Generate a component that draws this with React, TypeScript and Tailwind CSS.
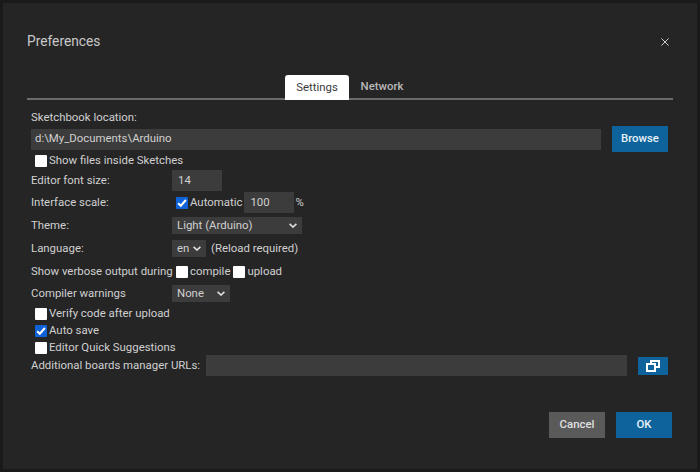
function Box({ checked = false, className = "" }: { checked?: boolean; className?: string }) {
  return checked ? (
    <span className={`flex h-[12px] w-[12px] shrink-0 items-center justify-center rounded-[1px] bg-[#0f62d8] ${className}`}>
      <svg width="10" height="10" viewBox="0 0 9 9" fill="none" stroke="white" strokeWidth="1.8"><path d="M1 4.8 3.4 7 8 1.8" /></svg>
    </span>
  ) : (
    <span className={`block h-[12px] w-[12px] shrink-0 rounded-[1px] bg-white ${className}`} />
  );
}
function Chevron() {
  return (
    <svg width="8" height="5" viewBox="0 0 8 5" fill="none" stroke="#e0e0e0" strokeWidth="1.6"><path d="M.6.8 4 4 7.4.8" /></svg>
  );
}
function Sel({ text, w }: { text: string; w: string }) {
  return (
    <div className={`flex h-[17px] items-center justify-between bg-[#3c3c3c] pl-[5px] pr-[5px] ${w}`}>
      <span>{text}</span>
      <Chevron />
    </div>
  );
}
function Row({ label, h, children }: { label: string; h: string; children?: React.ReactNode }) {
  return (
    <div className={`flex items-center ${h}`}>
      <span className="w-[141px] shrink-0 whitespace-nowrap">{label}</span>
      {children}
    </div>
  );
}
function Check({ label, checked, h }: { label: string; checked?: boolean; h: string }) {
  return (
    <div className={`flex items-center pl-[4px] ${h}`}>
      <Box checked={checked} />
      <span className="ml-[2px]">{label}</span>
    </div>
  );
}
export default function App() {
  return (
    <div className="h-[472px] w-[700px] overflow-hidden bg-[#1a1a1b] p-[3px] text-[11.4px] leading-none text-[#d0d0d0] [font-family:Roboto,sans-serif]">
      <div className="flex h-[466px] flex-col bg-[#252526] px-[24px]">
        <div className="flex h-[71px] shrink-0 items-center justify-between pt-[7px]">
          <h1 className="text-[13.75px] font-normal text-[#c8c8c8]">Preferences</h1>
          <svg className="mr-[4px]" width="8" height="8" viewBox="0 0 8 8" stroke="#cccccc" strokeWidth="1"><path d="M.4.4l7.2 7.2M7.6.4.4 7.6" /></svg>
        </div>
        <div className="flex h-[26px] shrink-0 items-stretch justify-center border-b-2 border-[#6b6b6b]">
          <div className="-mb-[2px] mt-[1px] flex w-[64px] items-center justify-center rounded-t-[3px] bg-white text-[#3a3a3a]">Settings</div>
          <div className="mt-[1px] flex w-[66px] items-center justify-center font-medium text-[#b8b8b8]">Network</div>
        </div>
        <div className="flex flex-col pl-[4px] pr-[5px] pt-[11px]">
          <div className="flex h-[14px] items-center">Sketchbook location:</div>
          <div className="mt-[1px] flex items-center">
            <div className="flex h-[21px] w-[570px] items-center bg-[#3c3c3c] pl-[4px]">d:\My_Documents\Arduino</div>
            <button className="ml-[11px] flex h-[26px] w-[56px] items-center justify-center bg-[#0e639c] font-medium text-[#e8f1f8]">Browse</button>
          </div>
          <Check label="Show files inside Sketches" h="h-[16px] pt-[1px]" />
          <Row label="Editor font size:" h="h-[21px] mt-[2px]">
            <div className="flex h-[21px] w-[50px] items-center bg-[#3c3c3c] pl-[6px]">14</div>
          </Row>
          <Row label="Interface scale:" h="h-[21px] mt-[1px]">
            <Box checked className="ml-[4px]" />
            <span className="ml-[2px]">Automatic</span>
            <div className="ml-[2px] flex h-[21px] w-[50px] items-center bg-[#3c3c3c] pl-[6px]">100</div>
            <span className="ml-[1px]">%</span>
          </Row>
          <Row label="Theme:" h="h-[17px] mt-[4px]"><Sel text="Light (Arduino)" w="w-[130px]" /></Row>
          <Row label="Language:" h="h-[17px] mt-[6px]">
            <Sel text="en" w="w-[34px]" />
            <span className="ml-[5px]">(Reload required)</span>
          </Row>
          <Row label="Show verbose output during" h="h-[17px] mt-[6px]">
            <Box className="ml-[4px]" />
            <span className="ml-[2px]">compile</span>
            <Box className="ml-[3px]" />
            <span className="ml-[2px]">upload</span>
          </Row>
          <Row label="Compiler warnings" h="h-[17px] mt-[5px]"><Sel text="None" w="w-[58px]" /></Row>
          <Check label="Verify code after upload" h="h-[17px] mt-[3px]" />
          <Check label="Auto save" checked h="h-[17px]" />
          <Check label="Editor Quick Suggestions" h="h-[17px]" />
          <div className="-mt-[1px] flex h-[21px] items-center">
            <span className="w-[175px] shrink-0 whitespace-nowrap">Additional boards manager URLs:</span>
            <div className="h-[21px] w-[421px] bg-[#3c3c3c]" />
            <button className="ml-[11px] flex h-[18px] w-[30px] items-center justify-center bg-[#0e639c]">
              <svg width="14" height="12" viewBox="0 0 14 12" fill="none" stroke="white" strokeWidth="2"><path d="M5 3.5V1h8v6h-3" /><rect x="1" y="4" width="8" height="7" /></svg>
            </button>
          </div>
        </div>
        <div className="mt-[36px] flex justify-end gap-[11px] pr-[1px]">
          <button className="flex h-[26px] w-[56px] items-center justify-center bg-[#5a5a5a] font-medium text-[#e0e0e0]">Cancel</button>
          <button className="flex h-[26px] w-[56px] items-center justify-center bg-[#0e639c] font-medium text-[#e8f1f8]">OK</button>
        </div>
      </div>
    </div>
  );
}
